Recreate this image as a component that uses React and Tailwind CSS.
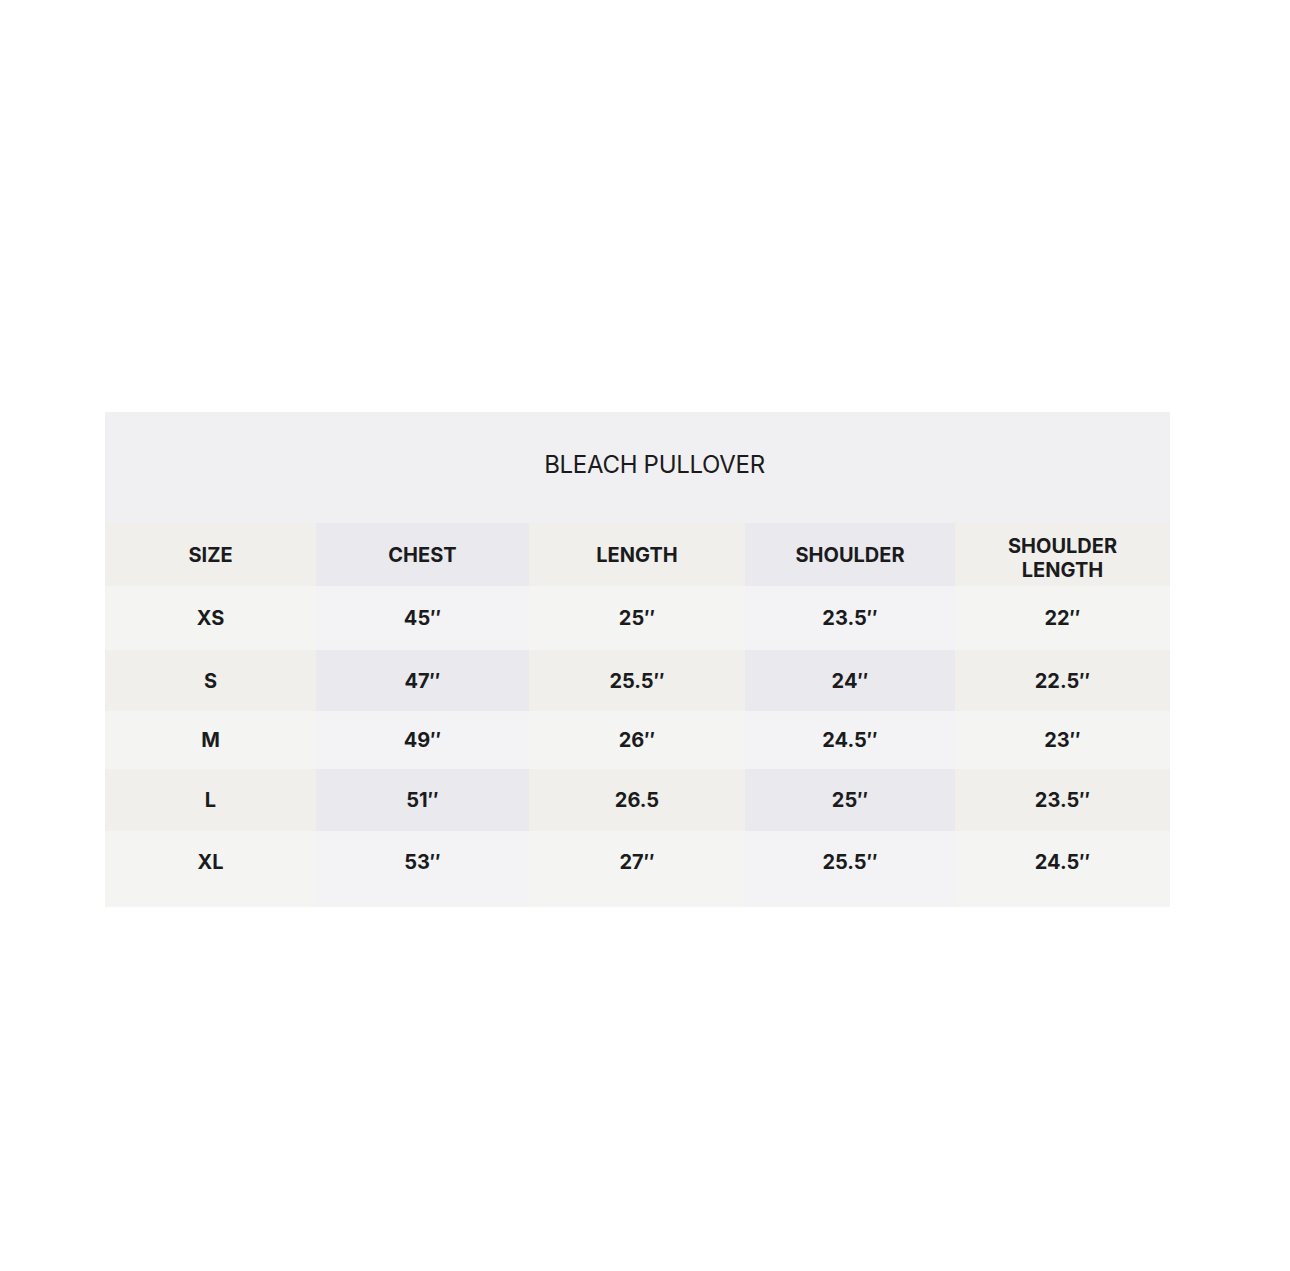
import React from 'react'

const columns = ['SIZE', 'CHEST', 'LENGTH', 'SHOULDER', ['SHOULDER', 'LENGTH']]

const rows = [
  ['XS', '45″', '25″', '23.5″', '22″'],
  ['S', '47″', '25.5″', '24″', '22.5″'],
  ['M', '49″', '26″', '24.5″', '23″'],
  ['L', '51″', '26.5', '25″', '23.5″'],
  ['XL', '53″', '27″', '25.5″', '24.5″'],
]

const widths = ['w-[211px]', 'w-[213px]', 'w-[216px]', 'w-[210px]', 'w-[215px]']
const rowHeights = ['h-[64px]', 'h-[61px]', 'h-[58px]', 'h-[62px]', 'h-[76px] pb-[14px]']

// light rows are plain, shaded rows alternate warm / cool per column
const shade = (rowIdx, colIdx, header) => {
  const shaded = header || rowIdx % 2 === 1
  if (!shaded) return colIdx % 2 === 1 || colIdx === 3 ? 'bg-[#f3f3f5]' : 'bg-[#f4f4f3]'
  return colIdx % 2 === 1 ? 'bg-[#e9e9ee]' : 'bg-[#f0efec]'
}

export default function App() {
  return (
    <div className="min-h-[1271px] bg-white pt-[412px] pl-[105px]" style={{ fontFamily: 'Inter, "Liberation Sans", sans-serif' }}>
      <div className="w-[1065px] text-[#1b1b1d]">
        <div className="h-[111px] bg-[#f0f0f2] flex items-start justify-center pt-[35px] pl-[34px]">
          <h1 className="text-[24px] font-normal tracking-[-0.3px]">BLEACH PULLOVER</h1>
        </div>
        <div className="flex h-[63px]">
          {columns.map((col, i) => (
            <div key={i} className={`${widths[i]} ${shade(0, i, true)} ${i === 4 ? 'pt-[6px]' : ''} flex items-center justify-center text-center text-[20px] font-bold leading-[24px]`}>
              {Array.isArray(col) ? (
                <span>{col[0]}<br />{col[1]}</span>
              ) : col}
            </div>
          ))}
        </div>
        {rows.map((row, r) => (
          <div key={r} className="flex">
            {row.map((cell, c) => (
              <div key={c} className={`${widths[c]} ${rowHeights[r]} ${shade(r, c, false)} flex items-center justify-center text-[20px] font-bold`}>
                {cell}
              </div>
            ))}
          </div>
        ))}
      </div>
    </div>
  )
}
